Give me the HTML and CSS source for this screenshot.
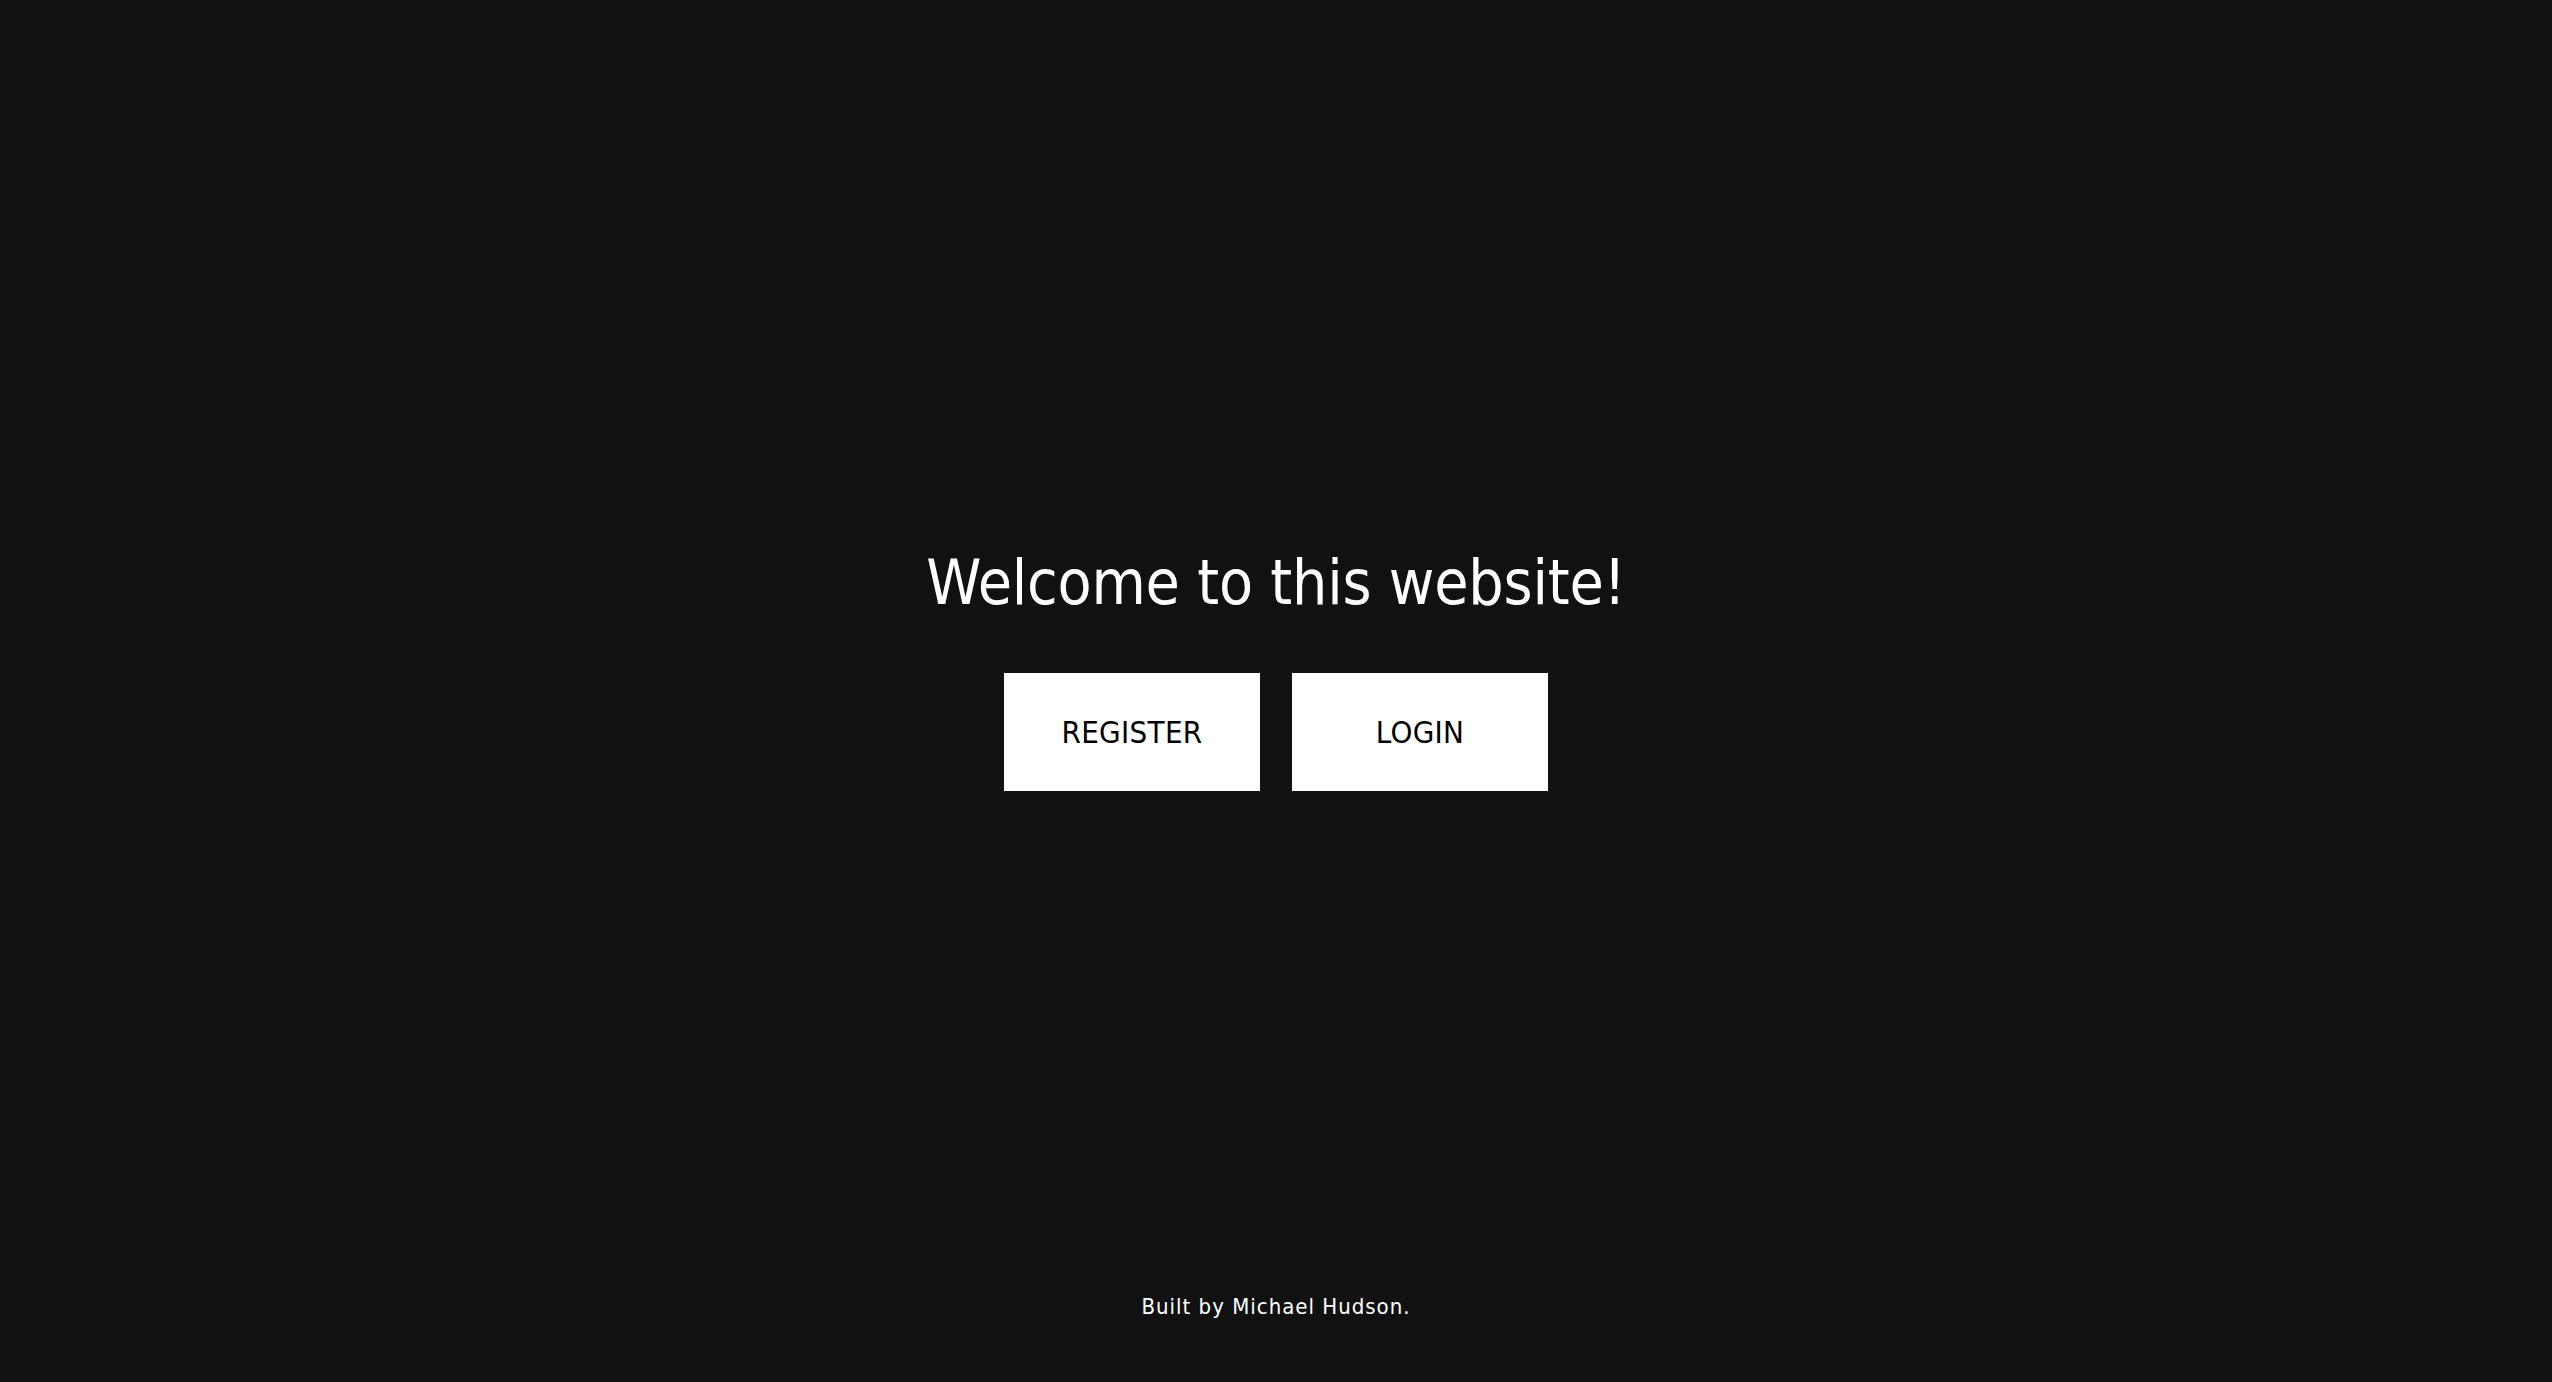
FILE: index.html
```html
<!DOCTYPE html>
<html lang="en">
<head>
<meta charset="utf-8">
<title>Welcome</title>
<link rel="stylesheet" href="styles.css">
</head>
<body>
<main class="hero">
  <h1 class="hero-title">Welcome to this website!</h1>
  <div class="hero-actions">
    <a class="btn" href="#">REGISTER</a>
    <a class="btn" href="#">LOGIN</a>
  </div>
</main>
<footer class="site-footer">Built by Michael Hudson.</footer>
</body>
</html>
```
FILE: styles.css
```css
html, body {
  margin: 0;
  padding: 0;
  height: 100%;
}
body {
  background: #111111;
  color: #ffffff;
  font-family: "Liberation Sans Narrow", "DejaVu Sans Condensed", "Liberation Sans", sans-serif;
  font-stretch: condensed;
  display: flex;
  flex-direction: column;
  min-height: 100vh;
}
.hero {
  flex: 1;
  display: flex;
  flex-direction: column;
  align-items: center;
  justify-content: center;
  padding-top: 40px;
}
.hero-title {
  margin: 0 0 50px;
  font-size: 62px;
  font-weight: 400;
  line-height: 80px;
  letter-spacing: -0.2px;
}
.hero-actions {
  display: flex;
  gap: 32px;
}
.btn {
  display: flex;
  align-items: center;
  justify-content: center;
  width: 256px;
  height: 118px;
  background: #ffffff;
  color: #000000;
  text-decoration: none;
  font-size: 31px;
  letter-spacing: 0.3px;
}
.site-footer {
  text-align: center;
  font-size: 22px;
  letter-spacing: 1px;
  padding: 0 0 62px;
  line-height: 26px;
}
```
